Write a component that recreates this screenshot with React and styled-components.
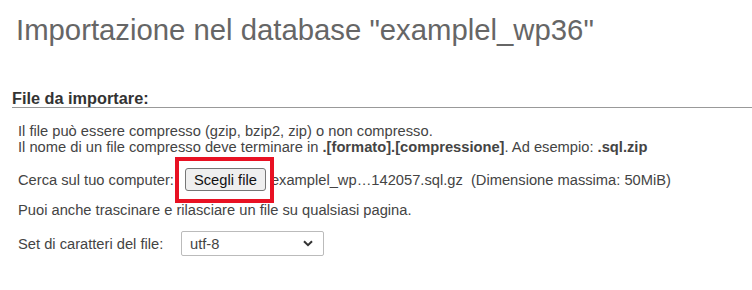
import React from 'react';
import styled, { createGlobalStyle } from 'styled-components';

const GlobalStyle = createGlobalStyle`
  html, body {
    margin: 0;
    padding: 0;
    background: #fff;
  }
  body {
    font-family: "Liberation Sans", Arial, sans-serif;
    font-size: 14.7px;
    color: #444;
  }
`;

const Page = styled.div`
  width: 752px;
  height: 290px;
  overflow: hidden;
  padding: 13px 0 0 12px;
  box-sizing: border-box;
`;

const Title = styled.h2`
  margin: 0 0 42px;
  padding-left: 4px;
  font-size: 29.3px;
  font-weight: normal;
  line-height: 34px;
  color: #666;
`;

const Legend = styled.h3`
  margin: 0;
  font-size: 16.3px;
  font-weight: bold;
  line-height: 18px;
  color: #333;
  border-bottom: 1px solid #999;
`;

const Body = styled.div`
  padding: 15px 0 0 6px;
`;

const Para = styled.p`
  margin: ${({ $top }) => $top || 0}px 0 0;
  line-height: 16px;
`;

const Row = styled.div`
  display: flex;
  align-items: center;
  height: 25px;
  margin-top: ${({ $top }) => $top || 0}px;
  white-space: nowrap;
`;

const Label = styled.span`
  display: inline-block;
  width: ${({ $w }) => ($w ? `${$w}px` : 'auto')};
`;

/* red annotation frame drawn over the file button */
const Marked = styled.span`
  position: relative;
  display: inline-flex;
  margin-left: 11px;

  &::after {
    content: '';
    position: absolute;
    top: -11px;
    left: -10px;
    right: -8px;
    bottom: -12px;
    border: 4px solid #e81123;
    pointer-events: none;
  }
`;

const FileButton = styled.button`
  width: 81px;
  height: 23px;
  padding: 0;
  font-family: "Liberation Sans", Arial, sans-serif;
  font-size: 14.7px;
  color: #111;
  background: #efefef;
  border: 1px solid #767676;
  border-radius: 3px;
`;

const FileName = styled.span`
  margin-left: 5px;
`;

const Select = styled.div`
  display: flex;
  align-items: center;
  justify-content: space-between;
  width: 143px;
  height: 25px;
  box-sizing: border-box;
  padding: 0 10px 0 8px;
  border: 1px solid #bbb;
  border-radius: 2px;
  color: #444;
  background: #fff;
`;

const Chevron = () => (
  <svg width="10" height="7" viewBox="0 0 10 7">
    <path d="M1 1.2 L5 5.2 L9 1.2" fill="none" stroke="#333" strokeWidth="2" />
  </svg>
);

export default function App() {
  return (
    <>
      <GlobalStyle />
      <Page>
        <Title>Importazione nel database "examplel_wp36"</Title>
        <Legend>File da importare:</Legend>
        <Body>
          <Para>Il file può essere compresso (gzip, bzip2, zip) o non compresso.</Para>
          <Para>
            Il nome di un file compresso deve terminare in <b>.[formato].[compressione]</b>. Ad esempio: <b>.sql.zip</b>
          </Para>
          <Row $top={12}>
            <Label>Cerca sul tuo computer:</Label>
            <Marked>
              <FileButton>Scegli file</FileButton>
            </Marked>
            <FileName>examplel_wp…142057.sql.gz</FileName>
            &nbsp;&nbsp;(Dimensione massima: 50MiB)
          </Row>
          <Para $top={10}>Puoi anche trascinare e rilasciare un file su qualsiasi pagina.</Para>
          <Row $top={13}>
            <Label $w={163}>Set di caratteri del file:</Label>
            <Select>
              utf-8
              <Chevron />
            </Select>
          </Row>
        </Body>
      </Page>
    </>
  );
}
